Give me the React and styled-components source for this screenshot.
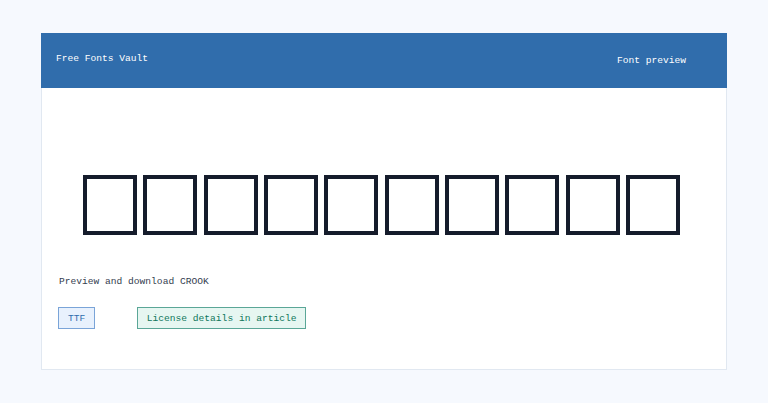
import React from 'react';
import styled, { createGlobalStyle } from 'styled-components';

const GlobalStyle = createGlobalStyle`
  html, body {
    margin: 0;
    padding: 0;
    background: #f6f9fe;
  }
  body {
    font-family: "Liberation Mono", "DejaVu Sans Mono", monospace;
  }
`;

const Page = styled.div`
  padding: 33px 41px 0 41px;
`;

const Card = styled.div`
  background: #ffffff;
  border: 1px solid #e1e8f1;
  border-top: none;
  height: 337px;
  box-sizing: border-box;
  display: flex;
  flex-direction: column;
`;

const Header = styled.header`
  height: 55px;
  margin: 0 -1px;
  background: #306dac;
  color: #ffffff;
  display: flex;
  align-items: center;
  justify-content: space-between;
  padding: 0 40px 0 15px;
  font-size: 9.6px;
`;

const Brand = styled.div`
  margin-top: -5px;
`;

const Nav = styled.nav`
  margin-top: -1px;
  margin-right: 1px;
`;

const Body = styled.main`
  padding: 87px 17px 0 16px;
`;

const GlyphRow = styled.div`
  display: flex;
  justify-content: center;
  gap: 6.3px;
  padding-right: 4px;
`;

// missing-glyph boxes shown while the font has not loaded
const Glyph = styled.span`
  width: 54px;
  height: 60px;
  box-sizing: border-box;
  border: 4px solid #151c2b;
`;

const Caption = styled.p`
  margin: 41px 0 0 1px;
  font-size: 9.6px;
  color: #343d4f;
`;

const Tags = styled.div`
  display: flex;
  align-items: center;
  gap: 42px;
  margin-top: 20px;
`;

const Tag = styled.span`
  height: 22px;
  box-sizing: border-box;
  display: inline-flex;
  align-items: center;
  padding: 0 ${p => (p.tone === 'green' ? '8.5px' : '9px')};
  font-size: 9.6px;
  border: 1px solid ${p => (p.tone === 'green' ? '#5aa697' : '#7aa4d8')};
  background: ${p => (p.tone === 'green' ? '#e6f6f1' : '#e8f1fd')};
  color: ${p => (p.tone === 'green' ? '#0f765c' : '#2f6dad')};
`;

const App = () => {
  const glyphs = Array.from({ length: 10 });

  return (
    <>
      <GlobalStyle />
      <Page>
        <Card>
          <Header>
            <Brand>Free Fonts Vault</Brand>
            <Nav>Font preview</Nav>
          </Header>
          <Body>
            <GlyphRow>
              {glyphs.map((_, i) => (
                <Glyph key={i} />
              ))}
            </GlyphRow>
            <Caption>Preview and download CROOK</Caption>
            <Tags>
              <Tag>TTF</Tag>
              <Tag tone="green">License details in article</Tag>
            </Tags>
          </Body>
        </Card>
      </Page>
    </>
  );
};

export default App;
